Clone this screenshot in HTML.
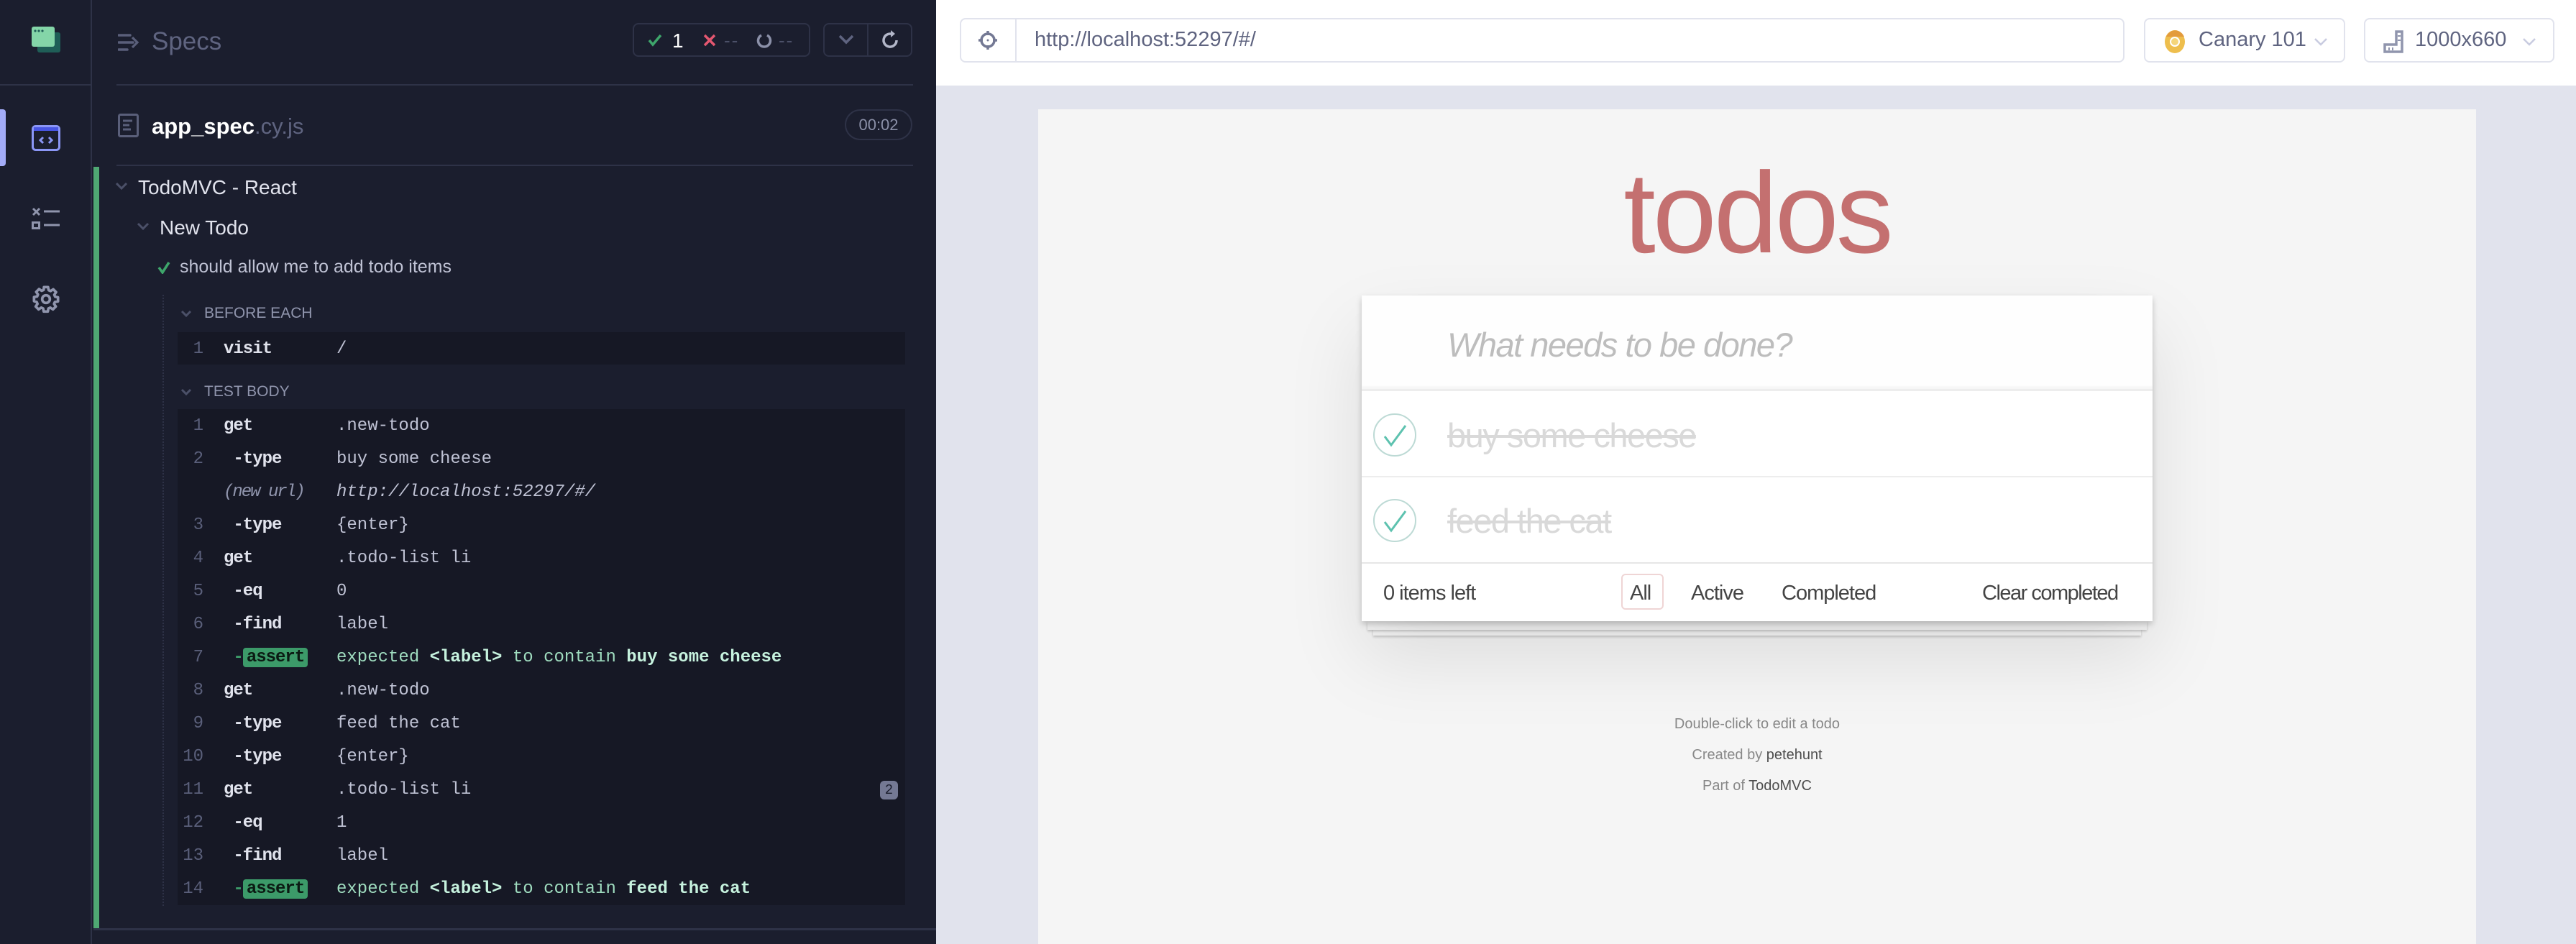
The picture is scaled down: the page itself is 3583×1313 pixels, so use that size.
<!DOCTYPE html>
<html><head><meta charset="utf-8"><style>
*{margin:0;padding:0;box-sizing:border-box}
body{width:3583px;height:1313px;overflow:hidden;background:#1b1e2e;font-family:"Liberation Sans",sans-serif;position:relative}
.a{position:absolute}
.row{position:absolute;left:247px;width:1012px;height:46px;font-family:"Liberation Mono",monospace;font-size:24px;line-height:48px;color:#bfc2d4}
.row .n{position:absolute;left:0;width:36px;text-align:right;color:#5a5f7a}
.row .c{position:absolute;left:64px;color:#e1e3ed;font-weight:bold;letter-spacing:-1px}
.row .v{position:absolute;left:221px;white-space:pre}
.badge{background:#3c9a69;color:#0b1a13;border-radius:4px;padding:0 5px;font-weight:bold}
.am{color:#9fdcbf}
.ab{color:#c6f2de;font-weight:bold}
.tb{border:2px solid #e1e3ed;border-radius:8px;background:#fff;position:absolute;top:25px;height:62px}
</style></head><body>
<div class="a" style="left:0;top:0;width:128px;height:1313px;background:#1b1e2e;border-right:2px solid #2e3247"></div>
<div class="a" style="left:0;top:117px;width:128px;height:2px;background:#2e3247"></div>
<svg class="a" style="left:44px;top:37px" width="42" height="38"><rect x="8" y="8" width="32" height="28" rx="3" fill="#1f5e57"/><rect x="0" y="0" width="32" height="28" rx="3" fill="#84d5a8"/><circle cx="5" cy="6" r="1.6" fill="#1f5e57"/><circle cx="10" cy="6" r="1.6" fill="#1f5e57"/><circle cx="15" cy="6" r="1.6" fill="#1f5e57"/></svg>
<div class="a" style="left:0;top:152px;width:8px;height:79px;background:#a3acf7;border-radius:0 4px 4px 0"></div>
<svg class="a" style="left:44px;top:174px" width="40" height="36"><rect x="1.5" y="1.5" width="37" height="33" rx="4" fill="none" stroke="#8b96f5" stroke-width="3"/><rect x="3" y="3" width="34" height="5" fill="#4956e3"/><path d="M16 17l-4 4 4 4M24 17l4 4-4 4" stroke="#8b96f5" stroke-width="3" fill="none"/></svg>
<svg class="a" style="left:44px;top:288px" width="40" height="32"><path d="M2 2l9 9M11 2l-9 9" stroke="#9095ad" stroke-width="3"/><rect x="1.5" y="21.5" width="9" height="8" fill="none" stroke="#9095ad" stroke-width="3"/><path d="M17 6h22M17 25h22" stroke="#9095ad" stroke-width="3"/></svg>
<svg class="a" style="left:44px;top:396px" width="40" height="40" viewBox="0 0 24 24"><path d="M10.3 2h3.4l.5 2.6 1.6.7 2.2-1.5 2.4 2.4-1.5 2.2.7 1.6 2.4.5v3.4l-2.6.5-.7 1.6 1.5 2.2-2.4 2.4-2.2-1.5-1.600.7-.5 2.6h-3.4l-.5-2.6-1.6-.7-2.2 1.5-2.4-2.4 1.5-2.2-.7-1.6L2 13.7v-3.4l2.6-.5.7-1.6-1.5-2.2 2.4-2.4 2.2 1.5 1.6-.7z" fill="none" stroke="#9095ad" stroke-width="2.2" stroke-linejoin="round"/><circle cx="12" cy="12" r="3.2" fill="none" stroke="#9095ad" stroke-width="2.2"/></svg>

<svg class="a" style="left:164px;top:46px" width="30" height="26"><path d="M1 3h16M1 13h20M1 23h12" stroke="#5a5f7a" stroke-width="3.5" stroke-linecap="round"/><path d="M20 6l7 7-7 7" stroke="#5a5f7a" stroke-width="3.2" fill="none"/></svg>
<div class="a" style="left:211px;top:38px;font-size:35px;color:#5f6480">Specs</div>
<div class="a" style="left:880px;top:32px;width:247px;height:47px;border:2px solid #2e3247;border-radius:8px"></div>
<svg class="a" style="left:901px;top:47px" width="20" height="18"><path d="M2 9l5 6 11-13" stroke="#3ea66b" stroke-width="3.5" fill="none"/></svg>
<div class="a" style="left:935px;top:41px;font-size:28px;color:#fff">1</div>
<svg class="a" style="left:978px;top:47px" width="18" height="18"><path d="M2 2l14 14M16 2L2 16" stroke="#e45770" stroke-width="3.5"/></svg>
<div class="a" style="left:1007px;top:41px;font-size:26px;color:#4b5068;letter-spacing:2px">--</div>
<svg class="a" style="left:1052px;top:46px" width="22" height="22"><path d="M7 3A8.5 8.5 0 1 0 15 3" stroke="#8b90a8" stroke-width="3.5" fill="none"/></svg>
<div class="a" style="left:1083px;top:41px;font-size:26px;color:#4b5068;letter-spacing:2px">--</div>
<div class="a" style="left:1145px;top:32px;width:124px;height:47px;border:2px solid #2e3247;border-radius:8px"></div>
<div class="a" style="left:1206px;top:33px;width:2px;height:45px;background:#2e3247"></div>
<svg class="a" style="left:1166px;top:48px" width="22" height="14"><path d="M2 2l9 9 9-9" stroke="#5f6480" stroke-width="3.5" fill="none"/></svg>
<svg class="a" style="left:1225px;top:40px" width="28" height="30"><path d="M22 16a9 9 0 1 1-5-8" stroke="#b3b7c9" stroke-width="3.5" fill="none"/><path d="M14 2l6 5-6 5z" fill="#b3b7c9"/></svg>
<div class="a" style="left:162px;top:117px;width:1108px;height:2px;background:#2e3247"></div>
<svg class="a" style="left:164px;top:158px" width="29" height="33"><rect x="1.5" y="1.5" width="26" height="30" rx="2" fill="none" stroke="#5a5f7a" stroke-width="3"/><path d="M7 10h13M7 16h9M7 22h11" stroke="#5a5f7a" stroke-width="3"/></svg>
<div class="a" style="left:211px;top:158px;font-size:31px;color:#fff;font-weight:bold">app_spec<span style="color:#5f6480;font-weight:normal">.cy.js</span></div>
<div class="a" style="left:1175px;top:152px;width:94px;height:43px;border:2px solid #2e3247;border-radius:22px;color:#8b90a8;font-size:22px;text-align:center;line-height:39px">00:02</div>
<div class="a" style="left:162px;top:229px;width:1108px;height:2px;background:#2e3247"></div>

<div class="a" style="left:130px;top:232px;width:8px;height:1061px;background:#4fa873"></div>
<div class="a" style="left:130px;top:1291px;width:1172px;height:3px;background:#2e3247"></div>
<svg class="a" style="left:160px;top:253px" width="18" height="12"><path d="M2 2l7 7 7-7" stroke="#4b5068" stroke-width="3" fill="none"/></svg>
<div class="a" style="left:192px;top:245px;font-size:28px;color:#e1e3ed">TodoMVC - React</div>
<svg class="a" style="left:190px;top:309px" width="18" height="12"><path d="M2 2l7 7 7-7" stroke="#4b5068" stroke-width="3" fill="none"/></svg>
<div class="a" style="left:222px;top:301px;font-size:28px;color:#e1e3ed">New Todo</div>
<svg class="a" style="left:219px;top:363px" width="18" height="18"><path d="M2 9l5 7 9-14" stroke="#3ea66b" stroke-width="3.5" fill="none"/></svg>
<div class="a" style="left:250px;top:357px;font-size:25px;color:#bfc2d4">should allow me to add todo items</div>
<div class="a" style="left:226px;top:410px;width:0;height:850px;border-left:2px dotted #2e3247"></div>
<svg class="a" style="left:251px;top:431px" width="16" height="11"><path d="M2 2l6 6 6-6" stroke="#4b5068" stroke-width="3" fill="none"/></svg>
<div class="a" style="left:284px;top:424px;font-size:21px;color:#9095ad">BEFORE EACH</div>
<div class="a" style="left:247px;top:462px;width:1012px;height:45px;background:#161825"></div>
<div class="row" style="top:462px"><span class="n">1</span><span class="c">visit</span><span class="v">/</span></div>
<svg class="a" style="left:251px;top:540px" width="16" height="11"><path d="M2 2l6 6 6-6" stroke="#4b5068" stroke-width="3" fill="none"/></svg>
<div class="a" style="left:284px;top:533px;font-size:21px;color:#9095ad">TEST BODY</div>
<div class="a" style="left:247px;top:569px;width:1012px;height:690px;background:#161825"></div>
<div class="row" style="top:569px"><span class="n">1</span><span class="c">get</span><span class="v">.new-todo</span></div>
<div class="row" style="top:615px"><span class="n">2</span><span class="c">&nbsp;-type</span><span class="v">buy some cheese</span></div>
<div class="row" style="top:661px"><span class="c" style="font-weight:normal;font-style:italic;color:#9095ad;letter-spacing:-2px">(new url)</span><span class="v" style="font-style:italic">http://localhost:52297/#/</span></div>
<div class="row" style="top:707px"><span class="n">3</span><span class="c">&nbsp;-type</span><span class="v">{enter}</span></div>
<div class="row" style="top:753px"><span class="n">4</span><span class="c">get</span><span class="v">.todo-list li</span></div>
<div class="row" style="top:799px"><span class="n">5</span><span class="c">&nbsp;-eq</span><span class="v">0</span></div>
<div class="row" style="top:845px"><span class="n">6</span><span class="c">&nbsp;-find</span><span class="v">label</span></div>
<div class="row" style="top:891px"><span class="n">7</span><span class="c"><span style="color:#3c9a69">&nbsp;-</span><span class="badge">assert</span></span><span class="v am">expected <span class="ab">&lt;label&gt;</span> to contain <span class="ab">buy some cheese</span></span></div>
<div class="row" style="top:937px"><span class="n">8</span><span class="c">get</span><span class="v">.new-todo</span></div>
<div class="row" style="top:983px"><span class="n">9</span><span class="c">&nbsp;-type</span><span class="v">feed the cat</span></div>
<div class="row" style="top:1029px"><span class="n">10</span><span class="c">&nbsp;-type</span><span class="v">{enter}</span></div>
<div class="row" style="top:1075px"><span class="n">11</span><span class="c">get</span><span class="v">.todo-list li</span><span class="a" style="left:977px;top:11px;width:25px;height:26px;border-radius:6px;background:#747994;color:#1b1e2e;font-size:19px;line-height:26px;text-align:center">2</span></div>
<div class="row" style="top:1121px"><span class="n">12</span><span class="c">&nbsp;-eq</span><span class="v">1</span></div>
<div class="row" style="top:1167px"><span class="n">13</span><span class="c">&nbsp;-find</span><span class="v">label</span></div>
<div class="row" style="top:1213px"><span class="n">14</span><span class="c"><span style="color:#3c9a69">&nbsp;-</span><span class="badge">assert</span></span><span class="v am">expected <span class="ab">&lt;label&gt;</span> to contain <span class="ab">feed the cat</span></span></div>

<div class="a" style="left:1302px;top:0;width:2281px;height:1313px;background:#e1e3ed"></div>
<div class="a" style="left:1302px;top:0;width:2281px;height:119px;background:#fff"></div>
<div class="tb" style="left:1335px;width:1620px"></div>
<div class="a" style="left:1412px;top:27px;width:2px;height:58px;background:#e1e3ed"></div>
<svg class="a" style="left:1360px;top:42px" width="28" height="28"><circle cx="14" cy="14" r="9" fill="none" stroke="#747994" stroke-width="3.5"/><path d="M14 1v6M14 21v6M1 14h6M21 14h6" stroke="#747994" stroke-width="3.5"/><circle cx="14" cy="14" r="1.5" fill="#747994"/></svg>
<div class="a" style="left:1439px;top:39px;font-size:29px;color:#5f6480">http://localhost:52297/#/</div>
<div class="tb" style="left:2982px;width:280px"></div>
<svg class="a" style="left:3010px;top:41px" width="30" height="34"><ellipse cx="15" cy="17" rx="14" ry="16" fill="#eebe4d"/><path d="M3 10A14 16 0 0 1 28 10H15z" fill="#e39b3c"/><circle cx="15" cy="17" r="6" fill="#f5d57a" stroke="#fff" stroke-width="2"/></svg>
<div class="a" style="left:3058px;top:39px;font-size:29px;color:#5f6480">Canary 101</div>
<svg class="a" style="left:3218px;top:52px" width="20" height="12"><path d="M2 2l8 8 8-8" stroke="#c9cce0" stroke-width="2.5" fill="none"/></svg>
<div class="tb" style="left:3288px;width:265px"></div>
<svg class="a" style="left:3315px;top:42px" width="28" height="32"><path d="M2 20h16V2h8v28H2z" fill="none" stroke="#9095ad" stroke-width="3.5"/><path d="M20 8h4M20 14h4M8 24v4M13 24v4" stroke="#9095ad" stroke-width="2"/></svg>
<div class="a" style="left:3359px;top:39px;font-size:29px;color:#5f6480">1000x660</div>
<svg class="a" style="left:3508px;top:52px" width="20" height="12"><path d="M2 2l8 8 8-8" stroke="#c9cce0" stroke-width="2.5" fill="none"/></svg>

<div class="a" style="left:1444px;top:152px;width:2000px;height:1161px;background:#f5f5f5"></div>
<div class="a" style="left:1444px;top:196px;width:2000px;text-align:center;font-size:160px;color:#c47070;letter-spacing:-4px;line-height:200px">todos</div>
<div class="a" style="left:1910px;top:874px;width:1068px;height:10px;background:#f6f6f6;box-shadow:0 2px 3px rgba(0,0,0,0.2)"></div>
<div class="a" style="left:1902px;top:864px;width:1084px;height:12px;background:#f6f6f6;box-shadow:0 2px 3px rgba(0,0,0,0.2)"></div>
<div class="a" style="left:1894px;top:411px;width:1100px;height:453px;background:#fff;box-shadow:0 4px 8px rgba(0,0,0,0.2),0 50px 100px rgba(0,0,0,0.1)"></div>
<div class="a" style="left:1894px;top:411px;width:1100px;height:133px;background:#fefefe;border-bottom:3px solid #ededed;box-shadow:inset 0 -4px 2px rgba(0,0,0,0.03)"></div>
<div class="a" style="left:2013px;top:452px;font-size:47px;font-style:italic;color:#bdbdbd;letter-spacing:-1.5px">What needs to be done?</div>
<svg class="a" style="left:1909px;top:574px" width="62" height="62"><circle cx="31" cy="31" r="29" fill="none" stroke="#bddad5" stroke-width="2"/><path d="M17 33l9 12 20-27" stroke="#5dc2af" stroke-width="3" fill="none"/></svg>
<div class="a" style="left:2013px;top:578px;font-size:47px;color:#d9d9d9;text-decoration:line-through;letter-spacing:-1.5px">buy some cheese</div>
<div class="a" style="left:1894px;top:662px;width:1100px;height:2px;background:#ededed"></div>
<svg class="a" style="left:1909px;top:693px" width="62" height="62"><circle cx="31" cy="31" r="29" fill="none" stroke="#bddad5" stroke-width="2"/><path d="M17 33l9 12 20-27" stroke="#5dc2af" stroke-width="3" fill="none"/></svg>
<div class="a" style="left:2013px;top:697px;font-size:47px;color:#d9d9d9;text-decoration:line-through;letter-spacing:-1.5px">feed the cat</div>
<div class="a" style="left:1894px;top:782px;width:1100px;height:2px;background:#e6e6e6"></div>
<div class="a" style="left:1924px;top:809px;font-size:29px;color:#444;letter-spacing:-1px">0 items left</div>
<div class="a" style="left:2255px;top:798px;width:59px;height:50px;border:2px solid rgba(175,47,47,0.2);border-radius:6px"></div>
<div class="a" style="left:2267px;top:809px;font-size:29px;color:#444;letter-spacing:-1px">All</div>
<div class="a" style="left:2352px;top:809px;font-size:29px;color:#444;letter-spacing:-1px">Active</div>
<div class="a" style="left:2478px;top:809px;font-size:29px;color:#444;letter-spacing:-1px">Completed</div>
<div class="a" style="left:2757px;top:809px;font-size:29px;color:#444;letter-spacing:-1.5px">Clear completed</div>
<div class="a" style="left:1444px;top:996px;width:2000px;text-align:center;font-size:20px;color:#888;line-height:22px">Double-click to edit a todo</div>
<div class="a" style="left:1444px;top:1039px;width:2000px;text-align:center;font-size:20px;color:#888;line-height:22px">Created by <span style="color:#4d4d4d">petehunt</span></div>
<div class="a" style="left:1444px;top:1082px;width:2000px;text-align:center;font-size:20px;color:#888;line-height:22px">Part of <span style="color:#4d4d4d">TodoMVC</span></div>
</body></html>
